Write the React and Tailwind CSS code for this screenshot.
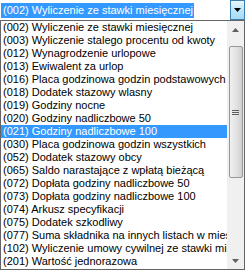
const items = [
  '(002) Wyliczenie ze stawki miesięcznej',
  '(003) Wyliczenie stalego procentu od kwoty',
  '(012) Wynagrodzenie urlopowe',
  '(013) Ewiwalent za urlop',
  '(016) Placa godzinowa godzin podstawowych',
  '(018) Dodatek stazowy wlasny',
  '(019) Godziny nocne',
  '(020) Godziny nadliczbowe 50',
  '(021) Godziny nadliczbowe 100',
  '(030) Placa godzinowa godzin wszystkich',
  '(052) Dodatek stazowy obcy',
  '(065) Saldo narastające z wpłatą bieżącą',
  '(072) Dopłata godziny nadliczbowe 50',
  '(073) Dopłata godziny nadliczbowe 100',
  '(074) Arkusz specyfikacji',
  '(075) Dodatek szkodliwy',
  '(077) Suma składnika na innych listach w miesiącu',
  '(102) Wyliczenie umowy cywilnej ze stawki miesięcznej',
  '(201) Wartość jednorazowa',
];

const selected = 8;

export default function App() {
  return (
    <div className="w-[245px] h-[270px] bg-white overflow-hidden font-['Liberation_Sans',sans-serif] text-[11px] text-black flex flex-col">
      {/* combo box */}
      <div className="flex h-[20px] shrink-0">
        <div className="flex-1 pt-[2px] pl-[1px] overflow-hidden whitespace-nowrap">
          <span className="bg-[#3399ff] text-white leading-[15px] inline-block pl-[2px] pr-[1px]">
            (002) Wyliczenie ze stawki miesięcznej
          </span>
        </div>
        <div className="w-[15px] h-[20px] border border-[#3c7fb1] bg-gradient-to-b from-[#eaf6fd] via-[#bee6fd] to-[#a7d9f5] flex items-center justify-center">
          <svg width="7" height="4" viewBox="0 0 7 4">
            <path d="M0 0h7L3.5 4z" fill="#000" />
          </svg>
        </div>
      </div>

      {/* list */}
      <div className="flex flex-1 border border-[#646464] min-h-0">
        <div className="flex-1 overflow-hidden">
          {items.map((t, i) => (
            <div
              key={i}
              className={`h-[13px] leading-[13px] pl-[2px] whitespace-nowrap ${
                i === selected ? 'bg-[#3399ff] text-white' : ''
              }`}
            >
              {t}
            </div>
          ))}
        </div>
        <div className="w-[17px] bg-[#f0f0f0] flex flex-col items-center">
          <div className="h-[17px] w-full flex items-center justify-center">
            <svg width="7" height="4" viewBox="0 0 7 4">
              <path d="M3.5 0L7 4H0z" fill="#606060" />
            </svg>
          </div>
          <div className="mt-[8px] w-[14px] h-[132px] rounded-[2px] border border-[#979797] bg-gradient-to-r from-[#f0f0f0] via-[#e4e4e4] to-[#cfcfcf] flex items-center justify-center">
            <svg width="7" height="7" viewBox="0 0 7 7">
              <path d="M0 1.5h7M0 3.5h7M0 5.5h7" stroke="#606060" strokeWidth="1" />
            </svg>
          </div>
          <div className="flex-1" />
          <div className="h-[17px] w-full flex items-center justify-center">
            <svg width="7" height="4" viewBox="0 0 7 4">
              <path d="M0 0h7L3.5 4z" fill="#606060" />
            </svg>
          </div>
        </div>
      </div>
    </div>
  );
}
